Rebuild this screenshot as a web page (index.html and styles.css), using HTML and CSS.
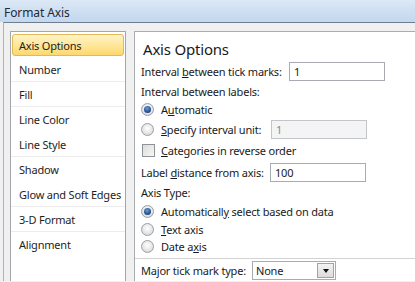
FILE: index.html
```html
<!DOCTYPE html>
<html>
<head>
<meta charset="utf-8">
<link rel="stylesheet" href="styles.css">
</head>
<body>
<div class="titlebar"><span class="title">Format Axis</span></div>
<div class="frame">
  <div class="nav">
    <div class="item selected"><span class="sel">Axis Options</span></div>
    <div class="item sep">Number</div>
    <div class="item sep">Fill</div>
    <div class="item">Line Color</div>
    <div class="item sep">Line Style</div>
    <div class="item">Shadow</div>
    <div class="item sep">Glow and Soft Edges</div>
    <div class="item sep">3-D Format</div>
    <div class="item">Alignment</div>
  </div>
  <div class="content">
    <div class="heading">Axis Options</div>
    <div class="row r22"><span class="lbl w148">Interval <u>b</u>etween tick marks:</span><span class="tb">1</span></div>
    <div class="row r18">Interval between labels:</div>
    <div class="row r19"><span class="radio on"></span><span>A<u>u</u>tomatic</span></div>
    <div class="row r20"><span class="radio"></span><span class="lbl w110"><u>S</u>pecify interval unit:</span><span class="tb dis">1</span></div>
    <div class="row r23"><span class="check"></span><span><u>C</u>ategories in reverse order</span></div>
    <div class="row r21"><span class="lbl w129">Label <u>d</u>istance from axis:</span><span class="tb">100</span></div>
    <div class="row r19">Axis Type:</div>
    <div class="row r18"><span class="radio on"></span><span>Automaticall<u>y</u> select based on data</span></div>
    <div class="row r18"><span class="radio"></span><span><u>T</u>ext axis</span></div>
    <div class="row r17"><span class="radio"></span><span>Date a<u>x</u>is</span></div>
    <div class="hr"></div>
    <div class="row r23"><span class="lbl w111">Ma<u>j</u>or tick mark type:</span><span class="dd"><span class="ddtext">None</span><span class="ddbtn"><span class="tri"></span></span></span></div>
  </div>
</div>
</body>
</html>
```
FILE: styles.css
```css
html, body {
  margin: 0;
  padding: 0;
  width: 415px;
  height: 282px;
  overflow: hidden;
  background: #f0f0f0;
  font-family: "Noto Sans", "DejaVu Sans", sans-serif;
  font-size: 11px;
  letter-spacing: -0.2px;
  color: #1a1a1a;
}
.titlebar {
  height: 22px;
  background: linear-gradient(180deg, #dce8f6 0%, #cfdff2 50%, #c3d7ee 100%);
  display: flex;
  align-items: center;
  padding-left: 4px;
}
.title {
  font-size: 12px;
  letter-spacing: -0.1px;
  color: #1e2a36;
  margin-top: 2px;
}
.frame {
  border-top: 1px solid #6f7e8e;
  border-left: 1px solid #a9b3bd;
  margin-left: 3px;
  height: 259px;
  padding: 8px 0 0 6px;
  display: flex;
  gap: 8px;
  box-sizing: border-box;
}
.nav {
  width: 116px;
  box-sizing: border-box;
  background: #fff;
  border: 1px solid #a3a7ab;
  border-bottom: none;
  flex: none;
}
.item {
  height: 25px;
  box-sizing: border-box;
  padding-left: 8px;
  display: flex;
  align-items: center;
  color: #1e1e1e;
  white-space: nowrap;
}
.item.sep {
  border-bottom: 1px solid #ececec;
}
.item.selected {
  padding: 2px 1px 1px 1px;
}
.sel {
  flex: 1;
  height: 22px;
  box-sizing: border-box;
  border: 1px solid #e0b95a;
  border-radius: 3px;
  background: linear-gradient(180deg, #fff3c4 0%, #ffe79c 50%, #fdd86d 100%);
  display: flex;
  align-items: center;
  padding-left: 6px;
}
.content {
  flex: 1;
  background: #fff;
  border-left: 1px solid #a9adb2;
  border-top: 1px solid #a9adb2;
  padding: 6px 0 0 6px;
  box-sizing: border-box;
}
.heading {
  height: 22px;
  font-size: 15px;
  letter-spacing: -0.2px;
  display: flex;
  align-items: center;
  padding-left: 2px;
}
.row {
  display: flex;
  align-items: center;
  white-space: nowrap;
}
.r17 { height: 17px; }
.r18 { height: 18px; }
.r19 { height: 19px; }
.r20 { height: 20px; }
.r21 { height: 21px; }
.r22 { height: 22px; }
.r23 { height: 23px; }
.lbl { display: inline-block; flex: none; }
.w148 { width: 148px; }
.w110 { width: 110px; }
.w129 { width: 129px; }
.w111 { width: 111px; }
.tb {
  width: 96px;
  height: 19px;
  box-sizing: border-box;
  border: 1px solid #a8acb2;
  background: #fff;
  padding-left: 4px;
  display: flex;
  align-items: center;
}
.tb.dis {
  background: #f4f4f4;
  color: #8c8c8c;
  border-color: #c2c5c9;
}
.radio {
  width: 13px;
  height: 13px;
  border-radius: 50%;
  box-sizing: border-box;
  border: 1px solid #9aa0a6;
  background: radial-gradient(circle at 50% 40%, #ffffff 0%, #e6e6e6 55%, #c9cbce 100%);
  margin-right: 7px;
  flex: none;
  position: relative;
}
.radio.on::after {
  content: "";
  position: absolute;
  left: 2px;
  top: 2px;
  width: 7px;
  height: 7px;
  border-radius: 50%;
  background: radial-gradient(circle at 45% 35%, #6f9ed6 0%, #23508f 60%, #123866 100%);
}
.check {
  width: 13px;
  height: 13px;
  box-sizing: border-box;
  border: 1px solid #8e9399;
  background: linear-gradient(135deg, #dcdcdc 0%, #f7f7f7 100%);
  margin-left: 1px;
  margin-right: 6px;
  flex: none;
}
.hr {
  height: 1px;
  background: #d3d3d3;
  margin: 3px 0 0 -6px;
}
.dd {
  width: 84px;
  height: 19px;
  box-sizing: border-box;
  border: 1px solid #a8acb2;
  display: flex;
  align-items: stretch;
}
.ddtext {
  flex: 1;
  padding-left: 3px;
  display: flex;
  align-items: center;
}
.ddbtn {
  width: 17px;
  margin: 1px;
  box-sizing: border-box;
  border: 1px solid #a0a4a8;
  background: linear-gradient(180deg, #f3f3f3 0%, #dcdcdc 100%);
  display: flex;
  align-items: center;
  justify-content: center;
}
.tri {
  width: 0;
  height: 0;
  border-left: 3.5px solid transparent;
  border-right: 3.5px solid transparent;
  border-top: 4px solid #111;
}
u { text-decoration: underline; text-underline-offset: 1px; }
```
